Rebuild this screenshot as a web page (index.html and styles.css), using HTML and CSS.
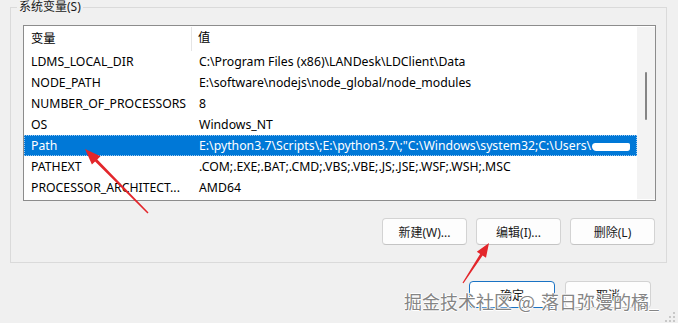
FILE: index.html
```html
<!DOCTYPE html>
<html lang="zh-CN">
<head>
<meta charset="utf-8">
<title>系统变量</title>
<link rel="stylesheet" href="styles.css">
</head>
<body>
<div class="dialog">
  <fieldset class="group">
    <legend class="group-title">系统变量(S)</legend>
    <div class="listview">
      <div class="list-main">
        <div class="row head">
          <div class="cell c1">变量</div>
          <div class="cell c2">值</div>
        </div>
        <div class="row"><div class="cell c1">LDMS_LOCAL_DIR</div><div class="cell c2">C:\Program Files (x86)\LANDesk\LDClient\Data</div></div>
        <div class="row"><div class="cell c1">NODE_PATH</div><div class="cell c2">E:\software\nodejs\node_global/node_modules</div></div>
        <div class="row"><div class="cell c1">NUMBER_OF_PROCESSORS</div><div class="cell c2">8</div></div>
        <div class="row"><div class="cell c1">OS</div><div class="cell c2">Windows_NT</div></div>
        <div class="row selected"><div class="cell c1">Path</div><div class="cell c2">E:\python3.7\Scripts\;E:\python3.7\;"C:\Windows\system32;C:\Users\<span class="redact"></span></div></div>
        <div class="row"><div class="cell c1">PATHEXT</div><div class="cell c2">.COM;.EXE;.BAT;.CMD;.VBS;.VBE;.JS;.JSE;.WSF;.WSH;.MSC</div></div>
        <div class="row"><div class="cell c1">PROCESSOR_ARCHITECT...</div><div class="cell c2">AMD64</div></div>
      </div>
      <div class="scrollbar"><div class="thumb"></div></div>
    </div>
    <div class="btn-row">
      <button class="btn">新建(W)...</button>
      <button class="btn">编辑(I)...</button>
      <button class="btn">删除(L)</button>
    </div>
  </fieldset>
  <div class="footer">
    <button class="btn wide default">确定</button>
    <button class="btn wide">取消</button>
  </div>
</div>
<svg class="annot" width="678" height="323" viewBox="0 0 678 323" aria-hidden="true">
  <polygon fill="#e3262b" points="85,149 91.9,164.6 95.1,161.5 147.5,213.5 148.5,212.5 97.3,159.4 100.5,156.2"/>
  <polygon fill="#e3262b" points="489,243 476.8,251.7 480.2,253.9 462.5,282.7 463.5,283.3 482.6,255.5 486,257.7"/>
  <g fill="#c8c8c8">
    <rect x="673" y="312" width="2" height="2"/>
    <rect x="669" y="316" width="2" height="2"/>
    <rect x="673" y="316" width="2" height="2"/>
    <rect x="665" y="320" width="2" height="2"/>
    <rect x="669" y="320" width="2" height="2"/>
    <rect x="673" y="320" width="2" height="2"/>
  </g>
</svg>
<div class="watermark">掘金技术社区 @ 落日弥漫的橘_</div>
</body>
</html>
```
FILE: styles.css
```css
* { box-sizing: border-box; }
html, body {
  margin: 0;
  padding: 0;
}
body {
  width: 678px;
  height: 323px;
  overflow: hidden;
  background: #f0f0f0;
  font-family: "Noto Sans", "Noto Sans CJK SC", sans-serif;
  font-size: 12px;
  color: #000;
  position: relative;
}
.dialog {
  display: flex;
  flex-direction: column;
  padding-top: 1px;
}
.group {
  margin: -1px 11px 0 10px;
  padding: 0 10px 17px 6px;
  border: 1px solid #dadada;
  min-width: 0;
}
.group-title {
  padding: 0 2px;
  font-size: 12px;
  line-height: 14px;
  color: #1a1a1a;
}
.listview {
  margin: 11px 0 0 6px;
  width: 633px;
  height: 176px;
  border: 1px solid #8c8c8c;
  background: #fff;
  display: flex;
  font-size: 12.25px;
}
.list-main {
  flex: 1;
  min-width: 0;
}
.row {
  display: grid;
  grid-template-columns: 168px 1fr;
  height: 21px;
  line-height: 21px;
}
.row.head {
  height: 25px;
  line-height: 24px;
}
.cell {
  padding-left: 7px;
  white-space: nowrap;
  overflow: hidden;
}
.row.head .c1 {
  border-right: 1px solid #e5e5e5;
  margin: 1px 0 0;
}
.row.head .c2 { padding-left: 6px; }
.row.selected {
  background: #0078d7;
  color: #fff;
  outline: 1px dotted #9cc8f0;
  outline-offset: -1px;
}
.redact {
  display: inline-block;
  width: 38px;
  height: 8px;
  margin-left: 1px;
  background: #fff;
  border-radius: 4px 2px 3px 5px;
  vertical-align: -1px;
}
.scrollbar {
  width: 18px;
  margin-top: 1px;
  margin-bottom: 1px;
  background: #f3f3f3;
  display: flex;
  justify-content: center;
}
.thumb {
  width: 2px;
  height: 48px;
  margin-top: 45px;
  background: #858585;
  border-radius: 1px;
}
.btn-row {
  display: flex;
  justify-content: flex-end;
  gap: 9px;
  margin-top: 17px;
  padding-right: 1px;
}
.btn {
  width: 85px;
  height: 27px;
  padding: 0;
  border: 1px solid #d3d3d3;
  border-bottom-color: #c4c4c4;
  border-radius: 4px;
  background: #fdfdfd;
  font: inherit;
  color: #1a1a1a;
}
.footer {
  display: flex;
  justify-content: flex-end;
  gap: 10px;
  margin: 18px 27px 0 0;
}
.btn.wide { width: 86px; }
.btn.default {
  border-color: #1a73c4;
  background: #fff;
}
.annot {
  position: absolute;
  left: 0;
  top: 0;
  pointer-events: none;
}
.watermark {
  position: absolute;
  left: 404px;
  top: 288px;
  font-family: "Noto Sans CJK SC", sans-serif;
  font-size: 18px;
  line-height: 26px;
  word-spacing: 2px;
  color: #858585;
  white-space: nowrap;
  text-shadow: 1px 0 0 #fff, -1px 0 0 #fff, 0 1px 0 #fff, 0 -1px 0 #fff;
}
```
